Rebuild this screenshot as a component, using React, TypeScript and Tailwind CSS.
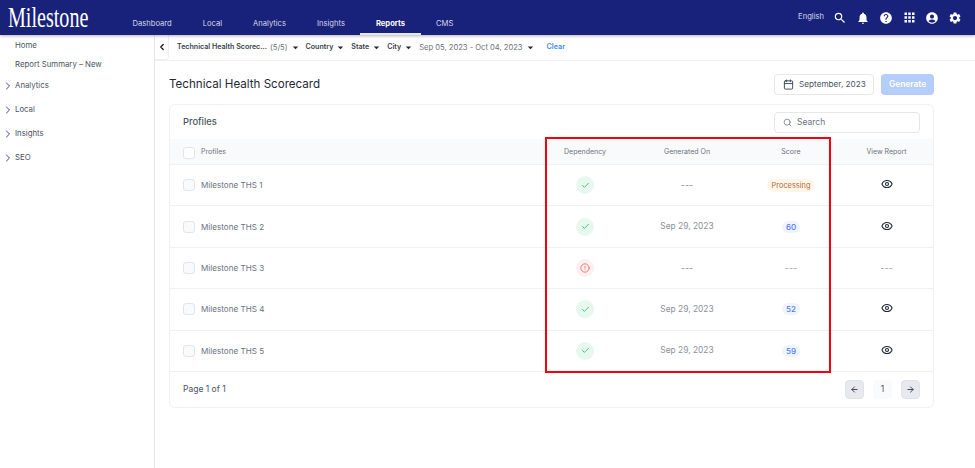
import React from "react";
import { MdSearch, MdNotifications, MdHelp, MdApps, MdAccountCircle, MdSettings, MdArrowDropDown } from "react-icons/md";
import { ChevronRight, ChevronLeft, Calendar, Search, Check, CircleAlert, Eye, ArrowLeft, ArrowRight } from "lucide-react";

const nav = ["Dashboard", "Local", "Analytics", "Insights", "Reports", "CMS"];
const rows = [
  { name: "Milestone THS 1", ok: true, date: "---", score: "Processing" },
  { name: "Milestone THS 2", ok: true, date: "Sep 29, 2023", score: "60" },
  { name: "Milestone THS 3", ok: false, date: "---", score: "---" },
  { name: "Milestone THS 4", ok: true, date: "Sep 29, 2023", score: "52" },
  { name: "Milestone THS 5", ok: true, date: "Sep 29, 2023", score: "59" },
];

function Filter({ label, extra }: { label: string; extra?: string }) {
  return (
    <span className="flex items-center font-semibold text-[#374151] text-[7.1px]">
      {label}
      {extra && <span className="ml-[3px] font-normal text-[7.6px] text-[#6b7280]">{extra}</span>}
      <MdArrowDropDown className="text-[#1f2937] text-[13px] ml-[1px]" />
    </span>
  );
}

function Score({ v }: { v: string }) {
  if (v === "Processing")
    return <span className="rounded-full bg-[#fef6e9] text-[#b4683c] text-[7.4px] px-[5px] h-[13px] leading-[13px]">Processing</span>;
  if (v === "---") return <span className="text-[#9ca3af] text-[9px]">---</span>;
  return <span className="rounded-full bg-[#eff4ff] text-[#4f7cf6] font-medium text-[8px] w-[18px] h-[12px] leading-[12px] text-center">{v}</span>;
}

export default function App() {
  return (
    <div className="w-[975px] h-[468px] bg-white overflow-hidden flex flex-col relative font-['Inter',sans-serif]">
      <header className="h-[35px] bg-[#19227a] flex items-center shrink-0 shadow-[0_1px_3px_rgba(0,0,0,0.3)] relative z-10">
        <div className="w-[117px] shrink-0 pl-[8px] pb-[1px]">
          <span className="inline-block origin-left scale-x-[0.67] font-['Liberation_Serif',serif] text-[30px] leading-[30px] text-white">Milestone</span>
        </div>
        <nav className="flex h-full">
          {nav.map((n) => (
            <span
              key={n}
              className={`h-full flex items-center pt-[15px] px-[15.5px] text-[7.6px] border-b-2 ${n === "Reports" ? "font-bold text-white border-[#e5e7eb]" : "text-[#d6d8ea] border-transparent"}`}
            >
              {n}
            </span>
          ))}
        </nav>
        <div className="ml-auto flex items-center pr-[13px] text-white">
          <span className="text-[7.6px] text-[#d6d8ea] mr-[9px] -mt-[1px]">English</span>
          <MdSearch className="text-[14px] mr-[9px]" />
          <MdNotifications className="text-[14px] mr-[9px]" />
          <MdHelp className="text-[14px] mr-[9px]" />
          <MdApps className="text-[15px] mr-[8px]" />
          <MdAccountCircle className="text-[14px] mr-[9px]" />
          <MdSettings className="text-[14px]" />
        </div>
      </header>

      <div className="flex flex-1 min-h-0">
        <aside className="w-[155px] shrink-0 border-r border-[#e5e7eb] pt-[4px] text-[7.8px] text-[#4b5563]">
          <div className="pl-[15px] h-[13px] leading-[13px]">Home</div>
          <div className="pl-[15px] h-[13px] leading-[13px] mt-[6px]">Report Summary – New</div>
          <div className="mt-[8px] flex flex-col gap-[11px]">
            {["Analytics", "Local", "Insights", "SEO"].map((s) => (
              <div key={s} className="flex items-center h-[13px]">
                <ChevronRight className="w-[12px] h-[12px] ml-[2px] mr-[1px] text-[#312e81]" strokeWidth={1.8} />
                <span>{s}</span>
              </div>
            ))}
          </div>
        </aside>

        <main className="flex-1 min-w-0 flex flex-col">
          <div className="h-[26px] shrink-0 border-b border-[#eef0f2] flex items-center">
            <div className="w-[14px] h-full border-r border-b rounded-br-[4px] border-[#eef0f2] flex items-center justify-center">
              <ChevronLeft className="w-[10px] h-[10px] text-[#111827]" strokeWidth={3} />
            </div>
            <div className="flex items-center pl-[8px] gap-[4px]">
              <Filter label="Technical Health Scorec..." extra="(5/5)" />
              <Filter label="Country" />
              <Filter label="State" />
              <Filter label="City" />
              <span className="flex items-center text-[7.6px] text-[#6b7280]">
                Sep 05, 2023 - Oct 04, 2023
                <MdArrowDropDown className="text-[#1f2937] text-[13px] ml-[1px]" />
              </span>
              <span className="ml-[6px] text-[7.2px] font-semibold text-[#3b8bf0]">Clear</span>
            </div>
          </div>

          <div className="pl-[14px] pr-[41px] flex flex-col">
            <div className="flex items-center h-[24px] mt-[11px]">
              <h1 className="text-[11.6px] text-[#1f2937] pt-[2px]">Technical Health Scorecard</h1>
              <div className="ml-auto flex items-center h-[21px] w-[100px] rounded-[4px] border border-[#e5e7eb] text-[8.2px] text-[#4b5563] pl-[8px] gap-[5px]">
                <Calendar className="w-[11px] h-[11px] text-[#374151]" />
                September, 2023
              </div>
              <div className="ml-[7px] flex items-center justify-center h-[21px] w-[53px] rounded-[4px] bg-[#b4cdfb] text-white font-semibold text-[8.4px]">Generate</div>
            </div>

            <section className="mt-[8px] rounded-[6px] border border-[#eef0f2] h-[304px] flex flex-col">
              <div className="h-[34px] shrink-0 flex items-center pl-[13px] pr-[13px]">
                <span className="text-[9.3px] font-medium text-[#4b5563]">Profiles</span>
                <div className="ml-auto w-[146px] h-[21px] rounded-[4px] border border-[#e5e7eb] flex items-center pl-[8px] gap-[5px] text-[8.5px] text-[#6b7280]">
                  <Search className="w-[9px] h-[9px]" />
                  Search
                </div>
              </div>

              <div className="h-[26px] shrink-0 bg-[#f9fafb] border-b border-[#eef0f2] flex items-center pt-[2px] text-[7px] text-[#6b7280]">
                <div className="w-[364px] flex items-center pl-[13px]">
                  <span className="w-[12px] h-[12px] rounded-[3px] border border-[#e1e4e8] bg-white mr-[6px]" />
                  Profiles
                </div>
                <div className="w-[102px] text-center">Dependency</div>
                <div className="w-[102px] text-center">Generated On</div>
                <div className="w-[106px] text-center">Score</div>
                <div className="flex-1 text-center pr-[4px]">View Report</div>
              </div>

              {rows.map((r) => (
                <div key={r.name} className="h-[41.4px] shrink-0 border-b border-[#f0f1f3] flex items-center">
                  <div className="w-[364px] flex items-center pl-[13px] text-[8.1px] text-[#6b7280]">
                    <span className="w-[12px] h-[12px] rounded-[3px] border border-[#e1e4e8] bg-[#f9fafb] mr-[6px]" />
                    {r.name}
                  </div>
                  <div className="w-[102px] flex justify-center">
                    <span className={`w-[18px] h-[18px] rounded-full flex items-center justify-center ${r.ok ? "bg-[#e7f9ee]" : "bg-[#fdf0f0]"}`}>
                      {r.ok ? (
                        <Check className="w-[9px] h-[9px] text-[#3fc27f]" strokeWidth={2.5} />
                      ) : (
                        <CircleAlert className="w-[10px] h-[10px] text-[#f0625f]" />
                      )}
                    </span>
                  </div>
                  <div className={`w-[102px] text-center text-[#8b919c] ${r.date === "---" ? "text-[9px]" : "text-[8.4px]"}`}>{r.date}</div>
                  <div className="w-[106px] flex justify-center">
                    <Score v={r.score} />
                  </div>
                  <div className="flex-1 flex justify-center pr-[4px]">
                    {r.score === "---" ? (
                      <span className="text-[#9ca3af] text-[9px]">---</span>
                    ) : (
                      <Eye className="w-[12px] h-[12px] text-[#1f2937] -mt-[2px]" strokeWidth={2.2} />
                    )}
                  </div>
                </div>
              ))}

              <div className="flex-1 flex items-center pl-[13px] pr-[13px] text-[8.5px] text-[#4b5563]">
                Page 1 of 1
                <div className="ml-auto flex items-center gap-[9px]">
                  <span className="w-[19px] h-[19px] rounded-[4px] bg-[#e7e9ee] border border-[#dfe2e7] flex items-center justify-center">
                    <ArrowLeft className="w-[9px] h-[9px] text-[#374151]" strokeWidth={2.5} />
                  </span>
                  <span className="w-[19px] h-[19px] rounded-[4px] bg-[#f9fafb] flex items-center justify-center text-[8.5px] text-[#4b5563]">1</span>
                  <span className="w-[19px] h-[19px] rounded-[4px] bg-[#e7e9ee] border border-[#dfe2e7] flex items-center justify-center">
                    <ArrowRight className="w-[9px] h-[9px] text-[#374151]" strokeWidth={2.5} />
                  </span>
                </div>
              </div>
            </section>
          </div>
        </main>
      </div>

      <div className="absolute left-[545px] top-[137px] w-[286px] h-[236px] border-2 border-[#f5000a] pointer-events-none" />
    </div>
  );
}
